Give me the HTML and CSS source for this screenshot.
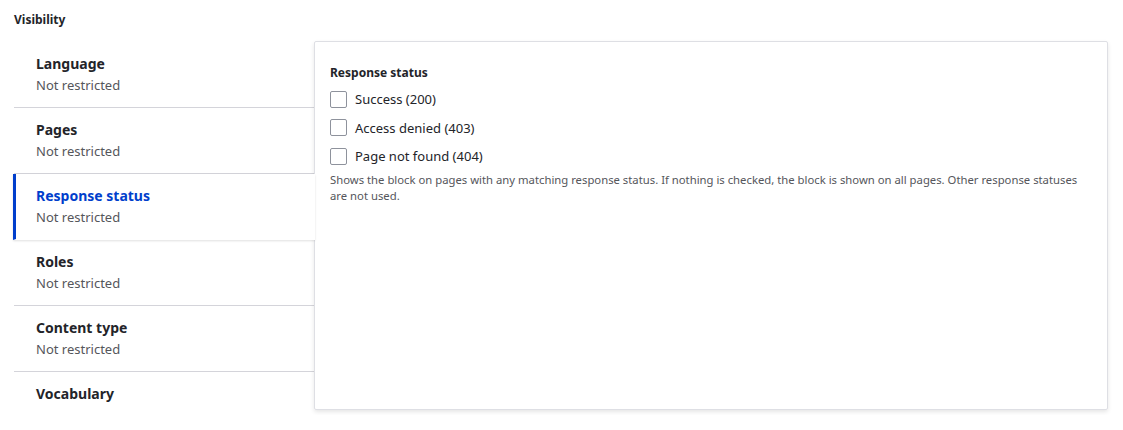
FILE: index.html
```html
<!DOCTYPE html>
<html lang="en">
<head>
<meta charset="utf-8">
<title>Visibility</title>
<link rel="stylesheet" href="styles.css">
</head>
<body>
<div class="field">
  <div class="field-title">Visibility</div>
  <div class="vtabs">
    <ul class="vtabs-menu">
      <li class="vtab"><span class="vtab-title">Language</span><span class="vtab-summary">Not restricted</span></li>
      <li class="vtab"><span class="vtab-title">Pages</span><span class="vtab-summary">Not restricted</span></li>
      <li class="vtab is-selected"><span class="vtab-title">Response status</span><span class="vtab-summary">Not restricted</span></li>
      <li class="vtab"><span class="vtab-title">Roles</span><span class="vtab-summary">Not restricted</span></li>
      <li class="vtab"><span class="vtab-title">Content type</span><span class="vtab-summary">Not restricted</span></li>
      <li class="vtab is-last"><span class="vtab-title">Vocabulary</span></li>
    </ul>
    <div class="vtabs-pane">
      <div class="pane-label">Response status</div>
      <label class="check"><span class="box"></span><span>Success (200)</span></label>
      <label class="check"><span class="box"></span><span>Access denied (403)</span></label>
      <label class="check"><span class="box"></span><span>Page not found (404)</span></label>
      <p class="desc">Shows the block on pages with any matching response status. If nothing is checked, the block is shown on all pages. Other response statuses are not used.</p>
    </div>
  </div>
</div>
</body>
</html>
```
FILE: styles.css
```css
html, body {
  margin: 0;
  padding: 0;
  background: #fff;
}
body {
  font-family: "Noto Sans", "Open Sans", sans-serif;
  color: #232429;
}
.field {
  padding: 11px 15px 0 14px;
}
.field-title {
  font-size: 12px;
  font-weight: 700;
  line-height: 18px;
  height: 18px;
  margin-bottom: 12px;
}
.vtabs {
  display: flex;
  align-items: flex-start;
}
.vtabs-menu {
  list-style: none;
  margin: 1px 0 0;
  padding: 0;
  width: 300px;
  flex: 0 0 300px;
}
.vtab {
  display: flex;
  flex-direction: column;
  padding: 12px 16px 11px 22px;
  border-bottom: 1px solid #d4d4da;
}
.vtab-title {
  font-size: 14px;
  font-weight: 700;
  line-height: 20px;
  color: #232429;
}
.vtab-summary {
  font-size: 13px;
  line-height: 22px;
  color: #55565b;
}
.vtab.is-selected {
  position: relative;
  z-index: 2;
  margin-left: -1px;
  margin-right: -1px;
  padding-left: 20px;
  border-left: 3px solid #003ecc;
  border-bottom-color: transparent;
  background: #fff;
  box-shadow: 0 1px 2px rgba(0, 0, 0, 0.12);
}
.vtab.is-selected .vtab-title {
  color: #003ecc;
}
.vtab.is-last {
  border-bottom: 0;
}
.vtabs-pane {
  flex: 1;
  height: 345px;
  border: 1px solid #dedfe4;
  border-radius: 2px;
  box-shadow: 0 2px 4px rgba(0, 0, 0, 0.1);
  padding: 22px 15px 0 15px;
  box-sizing: content-box;
}
.pane-label {
  font-size: 12px;
  font-weight: 700;
  line-height: 18px;
  margin-bottom: 3px;
}
.check {
  display: flex;
  align-items: center;
  gap: 8px;
  height: 28.5px;
  font-size: 13px;
  color: #232429;
}
.box {
  width: 15px;
  height: 15px;
  border: 1px solid #8e929c;
  border-radius: 2px;
  background: #fff;
}
.desc {
  margin: 1px 0 0;
  font-size: 11.3px;
  line-height: 16px;
  color: #55565b;
}
```
